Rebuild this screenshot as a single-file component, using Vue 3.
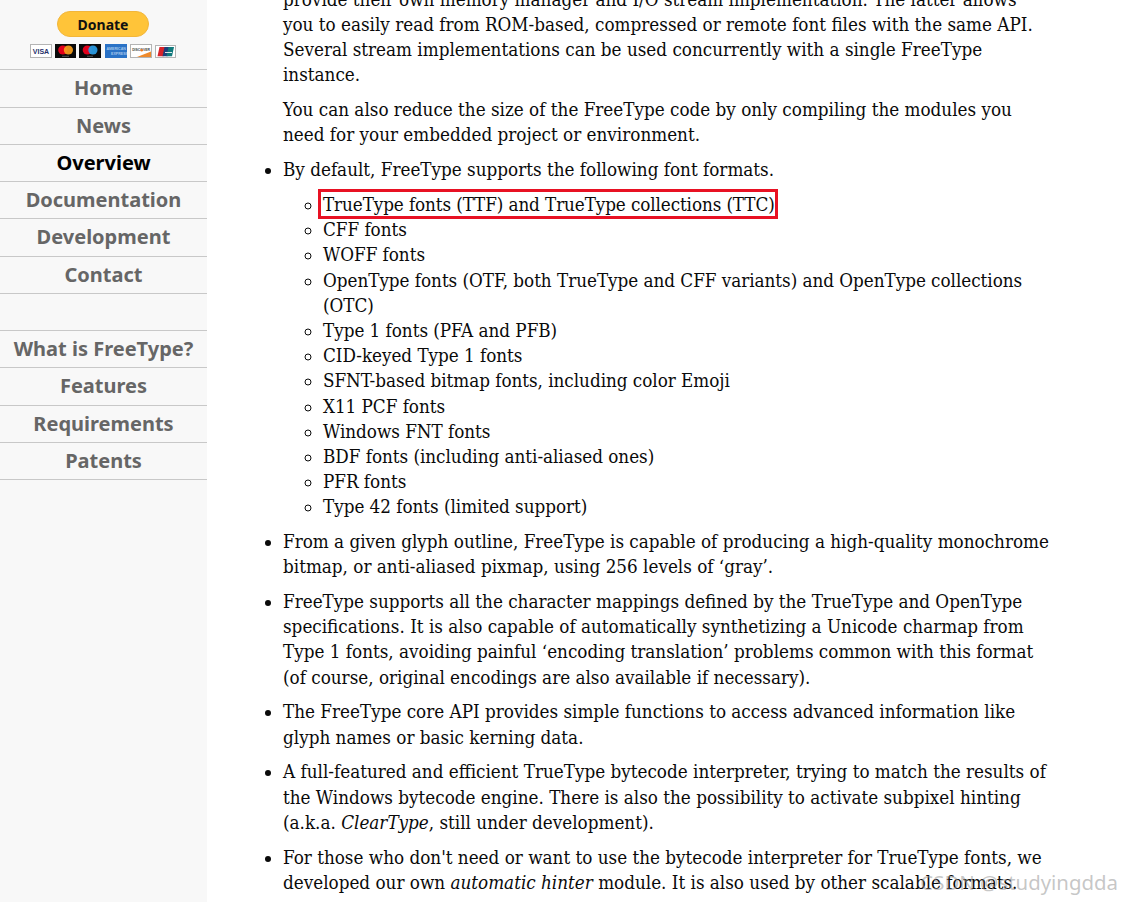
<script setup>
const nav1 = [
  { t: 'Home' }, { t: 'News' }, { t: 'Overview', active: true },
  { t: 'Documentation' }, { t: 'Development' }, { t: 'Contact' }
]
const nav2 = ['What is FreeType?', 'Features', 'Requirements', 'Patents']
const formats = [
  'CFF fonts', 'WOFF fonts',
  'OpenType fonts (OTF, both TrueType and CFF variants) and OpenType collections (OTC)',
  'Type 1 fonts (PFA and PFB)', 'CID-keyed Type 1 fonts',
  'SFNT-based bitmap fonts, including color Emoji', 'X11 PCF fonts', 'Windows FNT fonts',
  'BDF fonts (including anti-aliased ones)', 'PFR fonts', 'Type 42 fonts (limited support)'
]
</script>

<template>
  <div class="page">
    <aside class="side">
      <div class="donate">
        <div class="btn">Donate</div>
        <div class="cards">
          <svg width="22" height="14" viewBox="0 0 22 14"><rect x=".5" y=".5" width="21" height="13" fill="#fff" stroke="#b4b4b4"/><text x="11" y="9.6" text-anchor="middle" font-size="7" font-weight="700" font-family="Liberation Sans" fill="#27306b">VISA</text></svg>
          <svg width="21" height="14" viewBox="0 0 21 14"><rect width="21" height="14" fill="#0a0a0a"/><circle cx="7.8" cy="6" r="4.6" fill="#e2001a"/><circle cx="13.4" cy="6" r="4.6" fill="#f79e1b" opacity=".92"/><path d="M7 12.3h7" stroke="#777" stroke-width=".7"/></svg>
          <svg width="22" height="14" viewBox="0 0 22 14"><rect width="22" height="14" fill="#0a0a0a"/><circle cx="8.3" cy="6" r="4.6" fill="#e2001a"/><circle cx="13.9" cy="6" r="4.6" fill="#2a9ae0" opacity=".95"/><path d="M8 12.3h6" stroke="#777" stroke-width=".7"/></svg>
          <svg width="22" height="14" viewBox="0 0 22 14"><rect width="22" height="14" fill="#2a72c6"/><text x="1.500" y="6" font-size="3.6" font-weight="700" font-family="Liberation Sans" fill="#a4c6ea">AMERICAN</text><text x="6" y="11" font-size="3.6" font-weight="700" font-family="Liberation Sans" fill="#a4c6ea">EXPRESS</text></svg>
          <svg width="22" height="14" viewBox="0 0 22 14"><rect x=".5" y=".5" width="21" height="13" fill="#fff" stroke="#b4b4b4"/><path d="M7 13L21 7.500V13z" fill="#ee8a2c"/><text x="11" y="7.4" text-anchor="middle" font-size="3.4" font-weight="700" font-family="Liberation Sans" fill="#444">DISCOVER</text><circle cx="11.7" cy="6.300" r="1.200" fill="#ee7a1c"/></svg>
          <svg width="21" height="13" viewBox="0 0 21 13"><rect x=".5" y=".5" width="20" height="12" fill="#fff" stroke="#b4b4b4"/><path d="M4.500 2h6l-2 9.200H2.500z" fill="#d8232a"/><path d="M9.500 2h5l-2 9.200h-5z" fill="#1f3f7a"/><path d="M13.500 2h5.500l-2 9.200h-5.500z" fill="#11797c"/><path d="M10 7.500h7" stroke="#dfe8ea" stroke-width="1"/></svg>
        </div>
      </div>
      <nav class="nav">
        <a v-for="n in nav1" :key="n.t" :class="{ active: n.active }">{{ n.t }}</a>
        <a class="blank"></a>
        <a v-for="n in nav2" :key="n">{{ n }}</a>
      </nav>
    </aside>

    <main class="main">
      <p>provide their own memory manager and I/O stream implementation. The latter allows you to easily read from ROM-based, compressed or remote font files with the same API. Several stream implementations can be used concurrently with a single FreeType instance.</p>
      <p>You can also reduce the size of the FreeType code by only compiling the modules you need for your embedded project or environment.</p>
      <ul class="list">
        <li>
          <p>By default, FreeType supports the following font formats.</p>
          <ul class="sub">
            <li><span class="mark">TrueType fonts (TTF) and TrueType collections (TTC)</span></li>
            <li v-for="f in formats" :key="f">{{ f }}</li>
          </ul>
        </li>
        <li><p>From a given glyph outline, FreeType is capable of producing a high-quality monochrome bitmap, or anti-aliased pixmap, using 256 levels of ‘gray’.</p></li>
        <li><p>FreeType supports all the character mappings defined by the TrueType and OpenType specifications. It is also capable of automatically synthetizing a Unicode charmap from Type 1 fonts, avoiding painful ‘encoding translation’ problems common with this format (of course, original encodings are also available if necessary).</p></li>
        <li><p>The FreeType core API provides simple functions to access advanced information like glyph names or basic kerning data.</p></li>
        <li><p>A full-featured and efficient TrueType bytecode interpreter, trying to match the results of the Windows bytecode engine. There is also the possibility to activate subpixel hinting (a.k.a. <em>ClearType</em>, still under development).</p></li>
        <li><p>For those who don't need or want to use the bytecode interpreter for TrueType fonts, we developed our own <em>automatic hinter</em> module. It is also used by other scalable formats.</p></li>
      </ul>
    </main>
    <div class="wm">CSDN @studyingdda</div>
  </div>
</template>

<style>
html, body { margin: 0; background: #fff; overflow: hidden; }
</style>

<style scoped>
.page {
  position: relative;
  display: flex;
  width: 1122px;
  height: 902px;
  overflow: hidden;
  background: #fff;
}
.side {
  flex: none;
  width: 207px;
  background: #f8f8f8;
  font-family: "Noto Sans", sans-serif;
}
.donate {
  height: 69.3px;
  box-sizing: border-box;
  padding: 11px 1px 0 0;
  display: flex;
  flex-direction: column;
  align-items: center;
}
.btn {
  width: 92px;
  height: 26px;
  border-radius: 13px;
  box-sizing: border-box;
  border: 1px solid #f2b63a;
  background: #ffc439;
  color: #111;
  font-size: 14px;
  font-weight: 700;
  line-height: 25px;
  text-align: center;
}
.cards {
  display: flex;
  align-items: flex-end;
  gap: 3.4px;
  margin-top: 7px;
  height: 14px;
}
.nav { border-top: 1px solid #c8c8c8; }
.nav a {
  display: block;
  height: 36.28px;
  border-bottom: 1px solid #c8c8c8;
  font-size: 20px;
  font-weight: 700;
  line-height: 36.8px;
  text-align: center;
  color: #666;
}
.nav a.active { color: #000; }
.main {
  flex: none;
  width: 769px;
  margin-left: 76px;
  margin-top: -13.5px;
  font-family: "DejaVu Serif Condensed", "DejaVu Serif", serif;
  font-stretch: condensed;
  font-size: 18.7px;
  line-height: 25.2px;
  color: #0a0a0a;
}
p { margin: 0 0 9.7px; }
.list { margin: 0.6px 0 0; padding: 0; list-style: disc; }
.list > li { margin: 0; }
.list p { margin-bottom: 9.6px; }
.sub {
  margin: 0 0 9.5px;
  padding: 0 0 0 40px;
  list-style: circle;
  letter-spacing: -0.03px;
}
.mark { position: relative; letter-spacing: -0.1px; }
.mark::after {
  content: "";
  position: absolute;
  left: -5px;
  top: -5px;
  width: 460px;
  height: 30px;
  box-sizing: border-box;
  border: 3px solid #e81123;
}
.wm {
  position: absolute;
  right: 4px;
  bottom: 6px;
  font-family: "Noto Sans", sans-serif;
  font-size: 20.4px;
  color: rgba(150, 150, 150, .55);
}
</style>
